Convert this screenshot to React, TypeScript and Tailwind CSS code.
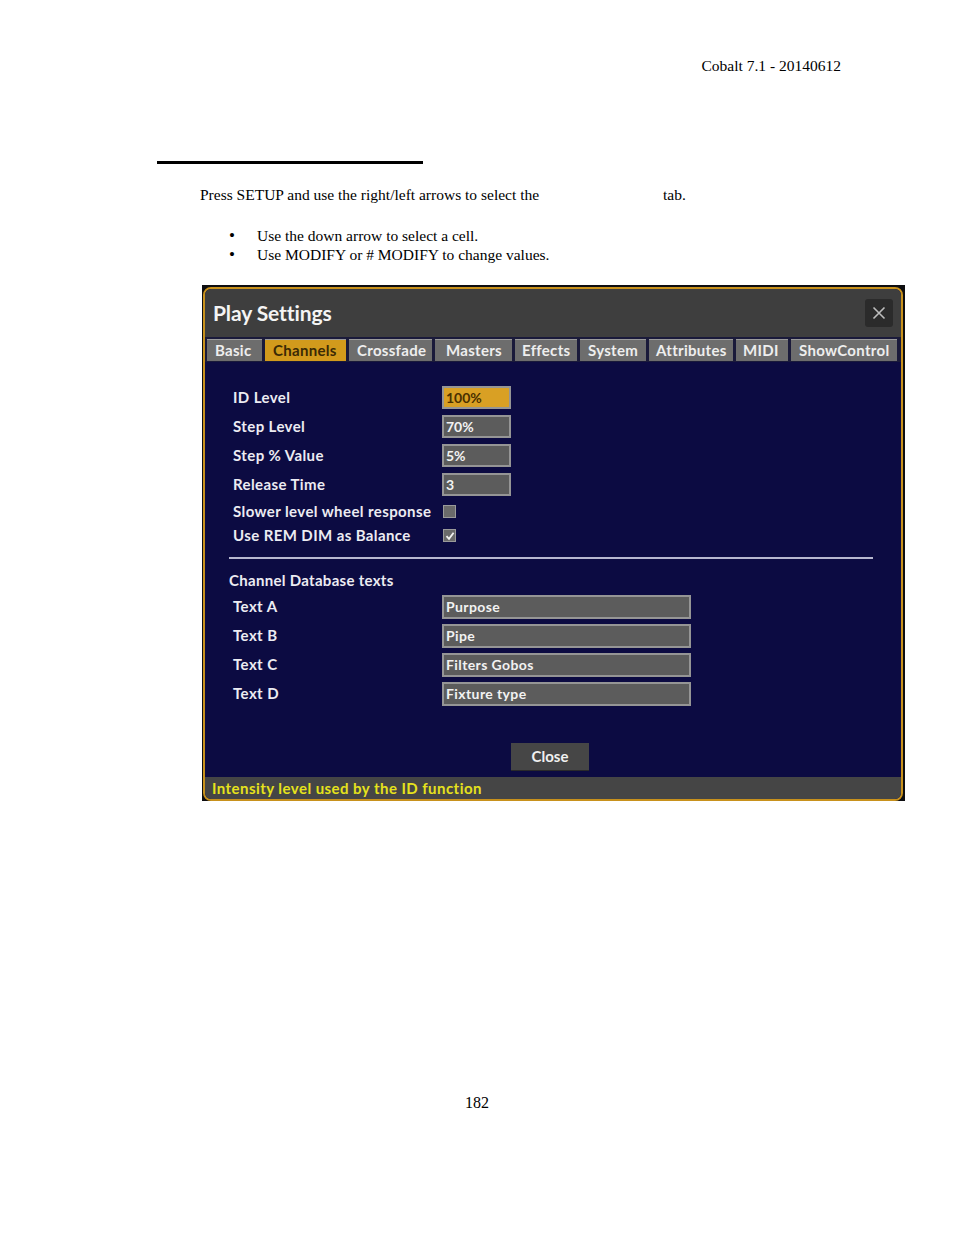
import * as React from 'react'

const tabs = [
    { name: 'Basic', w: 'w-[55px] pl-[8px]' },
    { name: 'Channels', w: 'w-[81px] pl-[8px]', active: true },
    { name: 'Crossfade', w: 'w-[83px] pl-[8px]' },
    { name: 'Masters', w: 'w-[77px] pl-[11px]' },
    { name: 'Effects', w: 'w-[62px] pl-[7px]' },
    { name: 'System', w: 'w-[66px] pl-[8px]' },
    { name: 'Attributes', w: 'w-[84px] pl-[7px]' },
    { name: 'MIDI', w: 'w-[52px] pl-[7px]' },
    { name: 'ShowControl', w: 'w-[106px] pl-[8px]' },
]

const levelRows = [
    { label: 'ID Level', value: '100%', active: true },
    { label: 'Step Level', value: '70%' },
    { label: 'Step % Value', value: '5%' },
    { label: 'Release Time', value: '3' },
]

const textRows = [
    { label: 'Text A', value: 'Purpose' },
    { label: 'Text B', value: 'Pipe' },
    { label: 'Text C', value: 'Filters Gobos' },
    { label: 'Text D', value: 'Fixture type' },
]

function Checkbox({ checked }: { checked?: boolean }) {
    return (
        <div className="w-[13px] h-[13px] bg-[#6a6a6a] border border-[#9a9a9a] flex items-center justify-center">
            {checked && (
                <svg width="10" height="10" viewBox="0 0 10 10">
                    <path d="M1.5 5.2 L4 7.8 L8.6 1.8" fill="none" stroke="#f2f2f2" strokeWidth="1.8" />
                </svg>
            )}
        </div>
    )
}

function PlaySettingsDialog() {
    return (
        <div className="w-[703px] h-[516px] bg-[#0d0d10] pl-[1px] pt-[2px] pr-[2px] flex font-['Lato',sans-serif]">
            <div className="flex-1 h-[514px] rounded-[8px] border-2 border-[#c8911c] overflow-hidden flex flex-col bg-[#0c0b42]">
                <div className="h-[48px] bg-[#3e3e3e] flex items-center justify-between pl-[8px] pr-[8px] shrink-0">
                    <span className="text-[21px] font-bold text-[#f4f4f4] tracking-[-0.1px]">Play Settings</span>
                    <div className="w-[28px] h-[28px] rounded-[3px] bg-[#2b2b2b] flex items-center justify-center">
                        <svg width="14" height="14" viewBox="0 0 14 14">
                            <path d="M1.5 1.5 L12.5 12.5 M12.5 1.5 L1.5 12.5" stroke="#bdbdbd" strokeWidth="1.6" />
                        </svg>
                    </div>
                </div>
                <div className="h-[25px] bg-[#1a1a3a] flex gap-[3px] pl-[2px] pt-[2px] shrink-0">
                    {tabs.map((t) => (
                        <div
                            key={t.name}
                            className={`${t.w} h-[22px] flex items-center text-[15px] font-bold tracking-[0.3px] border-t border-[#9a9a9a] ${
                                t.active ? 'bg-[#d29a1c] text-[#3b2a05]' : 'bg-[#6d6d6d] text-[#eeeeee]'
                            }`}
                        >
                            {t.name}
                        </div>
                    ))}
                </div>
                <div className="flex-1 flex flex-col pt-[24px] text-[15px] font-bold text-[#ececf2] tracking-[0.4px]">
                    {levelRows.map((r) => (
                        <div key={r.label} className="h-[29px] flex items-start">
                            <span className="w-[237px] pl-[28px] leading-[22px]">{r.label}</span>
                            <div
                                className={`w-[69px] h-[23px] border-2 border-[#959595] pl-[2px] leading-[19px] text-[14px] tracking-normal ${
                                    r.active ? 'bg-[#d9a024] text-[#4a3000]' : 'bg-[#5c5c5c] text-[#f2f2f2]'
                                }`}
                            >
                                {r.value}
                            </div>
                        </div>
                    ))}
                    <div className="h-[19px] flex items-center">
                        <span className="w-[238px] pl-[28px]">Slower level wheel response</span>
                        <Checkbox />
                    </div>
                    <div className="h-[29px] flex items-center">
                        <span className="w-[238px] pl-[28px]">Use REM DIM as Balance</span>
                        <Checkbox checked />
                    </div>
                    <div className="ml-[24px] mt-[7px] w-[644px] h-[2px] bg-[#b8b8d0]" />
                    <div className="h-[26px] mt-[10px] pl-[24px] leading-[22px] tracking-[0.3px]">Channel Database texts</div>
                    {textRows.map((r) => (
                        <div key={r.label} className="h-[29px] flex items-start">
                            <span className="w-[237px] pl-[28px] leading-[22px]">{r.label}</span>
                            <div className="w-[249px] h-[24px] border-2 border-[#959595] bg-[#5c5c5c] pl-[2px] leading-[20px] text-[14px] text-[#f2f2f2]">
                                {r.value}
                            </div>
                        </div>
                    ))}
                    <div className="mt-[32px] ml-[306px] w-[78px] h-[28px] bg-[#464646] border-b border-[#2a2a2a] flex items-center justify-center text-[15px] text-[#f0f0f0] tracking-normal">
                        Close
                    </div>
                </div>
                <div className="h-[22px] bg-[#454545] flex items-center pl-[7px] shrink-0 text-[15px] font-bold text-[#e6e21c] tracking-[0.45px]">
                    Intensity level used by the ID function
                </div>
            </div>
        </div>
    )
}

export default function App() {
    return (
        <div className="w-[954px] h-[1235px] bg-white text-black font-['Liberation_Serif',serif] text-[15.5px] flex flex-col">
            <div className="pt-[57px] pr-[113px] text-right leading-[17px]">Cobalt 7.1 - 20140612</div>
            <div className="ml-[157px] mt-[87px] w-[266px] h-[3px] bg-black" />
            <div className="ml-[200px] mt-[22px] flex leading-[17px]">
                <span className="w-[463px]">Press SETUP and use the right/left arrows to select the</span>
                <span>tab.</span>
            </div>
            <ul className="mt-[23px] ml-[229px] leading-[19px]">
                <li className="flex">
                    <span className="w-[28px] text-[17px]">•</span>
                    <span>Use the down arrow to select a cell.</span>
                </li>
                <li className="flex">
                    <span className="w-[28px] text-[17px]">•</span>
                    <span>Use MODIFY or # MODIFY to change values.</span>
                </li>
            </ul>
            <div className="ml-[202px] mt-[21px]">
                <PlaySettingsDialog />
            </div>
            <div className="mt-[293px] text-center text-[16px] leading-[18px]">182</div>
        </div>
    )
}
